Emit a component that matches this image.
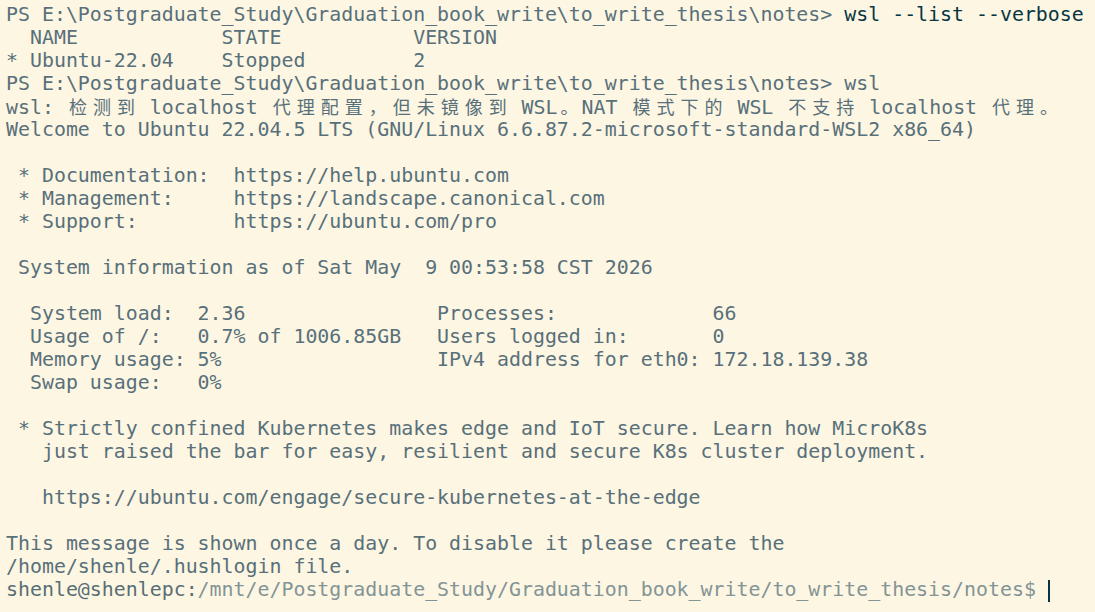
const lines: string[] = [
  "",
  "  NAME            STATE           VERSION",
  "* Ubuntu-22.04    Stopped         2",
  "",
  "",
  "Welcome to Ubuntu 22.04.5 LTS (GNU/Linux 6.6.87.2-microsoft-standard-WSL2 x86_64)",
  "",
  " * Documentation:  https://help.ubuntu.com",
  " * Management:     https://landscape.canonical.com",
  " * Support:        https://ubuntu.com/pro",
  "",
  " System information as of Sat May  9 00:53:58 CST 2026",
  "",
  "  System load:  2.36                Processes:             66",
  "  Usage of /:   0.7% of 1006.85GB   Users logged in:       0",
  "  Memory usage: 5%                  IPv4 address for eth0: 172.18.139.38",
  "  Swap usage:   0%",
  "",
  " * Strictly confined Kubernetes makes edge and IoT secure. Learn how MicroK8s",
  "   just raised the bar for easy, resilient and secure K8s cluster deployment.",
  "",
  "   https://ubuntu.com/engage/secure-kubernetes-at-the-edge",
  "",
  "This message is shown once a day. To disable it please create the",
  "/home/shenle/.hushlogin file.",
];

const PS = "PS E:\\Postgraduate_Study\\Graduation_book_write\\to_write_thesis\\notes> ";
const warn = "wsl: 检测到 localhost 代理配置，但未镜像到 WSL。NAT 模式下的 WSL 不支持 localhost 代理。";

// wide chars take two cells in the terminal grid, ascii runs stay together
function Cells({ text }: { text: string }) {
  const parts = text.match(/[\u3000-\u9fff\uff00-\uffef]|[^\u3000-\u9fff\uff00-\uffef]+/g) ?? [];
  return (
    <>
      {parts.map((p, i) =>
        /[\u3000-\u9fff\uff00-\uffef]/.test(p) ? (
          <span
            key={i}
            className="inline-block w-[24px] leading-[23px] text-[18px] text-center font-['Noto_Sans_CJK_SC',sans-serif]"
          >
            {p}
          </span>
        ) : (
          <span key={i}>{p}</span>
        )
      )}
    </>
  );
}

function Line({ children }: { children?: React.ReactNode }) {
  return <div className="h-[23px] leading-[23px] whitespace-pre">{children}</div>;
}

export default function App() {
  return (
    <div className="w-[1095px] h-[612px] overflow-hidden bg-[#fdf6e3] pt-[3px] pl-[6px] text-[19.9px] text-[#58707a] font-['DejaVu_Sans_Mono',monospace]">
      {lines.map((l, i) => {
        if (i === 0)
          return (
            <Line key={i}>
              {PS}
              <span className="text-[#073642]">wsl --list --verbose</span>
            </Line>
          );
        if (i === 3) return <Line key={i}>{PS}wsl</Line>;
        if (i === 4)
          return (
            <Line key={i}>
              <Cells text={warn} />
            </Line>
          );
        return <Line key={i}>{l}</Line>;
      })}
      <Line>
        <span className="text-[#586e75]">shenle@shenlepc:</span>
        <span className="text-[#839496]">/mnt/e/Postgraduate_Study/Graduation_book_write/to_write_thesis/notes$ </span>
        <span className="inline-block w-[2px] h-[22px] align-middle bg-[#073642]" />
      </Line>
    </div>
  );
}
